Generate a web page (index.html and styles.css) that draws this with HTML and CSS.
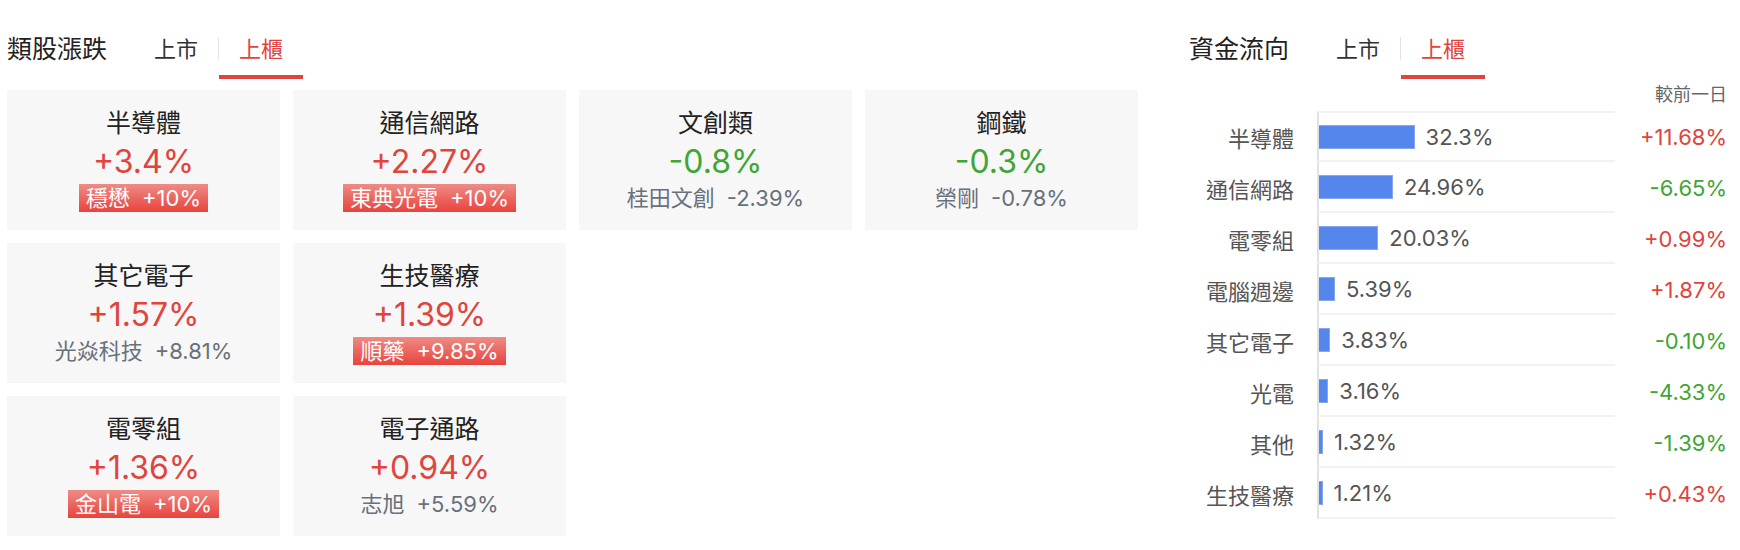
FILE: index.html
```html
<!DOCTYPE html>
<html lang="zh-Hant">
	<head>
		<meta charset="UTF-8" />
		<meta name="viewport" content="width=device-width, initial-scale=1.0" />
		<title>類股漲跌 / 資金流向</title>
		<link rel="stylesheet" href="styles.css">
	</head>
	<body>
		<div class="page">
			<!-- 類股漲跌 -->
			<section class="sectors">
				<div class="panel-head">
					<h2 class="panel-title">類股漲跌</h2>
					<div class="tabs">
						<span class="tab">上市</span>
						<i class="tab-divider"></i>
						<span class="tab active">上櫃</span>
					</div>
				</div>

				<div class="card-grid">
					<div class="card">
						<div class="card-name">半導體</div>
						<div class="card-pct up">+3.4%</div>
						<div class="card-lead limit"><span>穩懋</span><span>+10%</span></div>
					</div>
					<div class="card">
						<div class="card-name">通信網路</div>
						<div class="card-pct up">+2.27%</div>
						<div class="card-lead limit"><span>東典光電</span><span>+10%</span></div>
					</div>
					<div class="card">
						<div class="card-name">文創類</div>
						<div class="card-pct down">-0.8%</div>
						<div class="card-lead"><span>桂田文創</span><span>-2.39%</span></div>
					</div>
					<div class="card">
						<div class="card-name">鋼鐵</div>
						<div class="card-pct down">-0.3%</div>
						<div class="card-lead"><span>榮剛</span><span>-0.78%</span></div>
					</div>
					<div class="card card-break">
						<div class="card-name">其它電子</div>
						<div class="card-pct up">+1.57%</div>
						<div class="card-lead"><span>光焱科技</span><span>+8.81%</span></div>
					</div>
					<div class="card">
						<div class="card-name">生技醫療</div>
						<div class="card-pct up">+1.39%</div>
						<div class="card-lead limit"><span>順藥</span><span>+9.85%</span></div>
					</div>
					<div class="card card-break">
						<div class="card-name">電零組</div>
						<div class="card-pct up">+1.36%</div>
						<div class="card-lead limit"><span>金山電</span><span>+10%</span></div>
					</div>
					<div class="card">
						<div class="card-name">電子通路</div>
						<div class="card-pct up">+0.94%</div>
						<div class="card-lead"><span>志旭</span><span>+5.59%</span></div>
					</div>
				</div>
			</section>

			<!-- 資金流向 -->
			<section class="flow">
				<div class="panel-head">
					<h2 class="panel-title">資金流向</h2>
					<div class="tabs">
						<span class="tab">上市</span>
						<i class="tab-divider"></i>
						<span class="tab active">上櫃</span>
					</div>
				</div>

				<div class="flow-note">較前一日</div>

				<div class="flow-chart">
					<div class="flow-row">
						<span class="flow-label">半導體</span>
						<div class="flow-track"><span class="flow-bar" style="width: 32.3%"></span><span class="flow-value">32.3%</span></div>
						<span class="flow-change up">+11.68%</span>
					</div>
					<div class="flow-row">
						<span class="flow-label">通信網路</span>
						<div class="flow-track"><span class="flow-bar" style="width: 24.96%"></span><span class="flow-value">24.96%</span></div>
						<span class="flow-change down">-6.65%</span>
					</div>
					<div class="flow-row">
						<span class="flow-label">電零組</span>
						<div class="flow-track"><span class="flow-bar" style="width: 20.03%"></span><span class="flow-value">20.03%</span></div>
						<span class="flow-change up">+0.99%</span>
					</div>
					<div class="flow-row">
						<span class="flow-label">電腦週邊</span>
						<div class="flow-track"><span class="flow-bar" style="width: 5.39%"></span><span class="flow-value">5.39%</span></div>
						<span class="flow-change up">+1.87%</span>
					</div>
					<div class="flow-row">
						<span class="flow-label">其它電子</span>
						<div class="flow-track"><span class="flow-bar" style="width: 3.83%"></span><span class="flow-value">3.83%</span></div>
						<span class="flow-change down">-0.10%</span>
					</div>
					<div class="flow-row">
						<span class="flow-label">光電</span>
						<div class="flow-track"><span class="flow-bar" style="width: 3.16%"></span><span class="flow-value">3.16%</span></div>
						<span class="flow-change down">-4.33%</span>
					</div>
					<div class="flow-row">
						<span class="flow-label">其他</span>
						<div class="flow-track"><span class="flow-bar" style="width: 1.32%"></span><span class="flow-value">1.32%</span></div>
						<span class="flow-change down">-1.39%</span>
					</div>
					<div class="flow-row">
						<span class="flow-label">生技醫療</span>
						<div class="flow-track"><span class="flow-bar" style="width: 1.21%"></span><span class="flow-value">1.21%</span></div>
						<span class="flow-change up">+0.43%</span>
					</div>
				</div>
			</section>
		</div>
	</body>
</html>
```

FILE: styles.css
```css
body {
	margin: 0;
	font-family: Inter, 'Noto Sans CJK TC', sans-serif;
	background-color: #fff;
	color: #222;
}
.page {
	display: flex;
	padding: 0 7px;
}
.sectors {
	width: 1131px;
}
.flow {
	width: 538px;
	margin-left: 51px;
}

/* 標題列與分頁 */
.panel-head {
	display: flex;
	align-items: flex-start;
}
.panel-title {
	margin: 0;
	padding-top: 32px;
	font-size: 25px;
	font-weight: 400;
	line-height: 34px;
	color: #222;
}
.tabs {
	display: flex;
	align-items: flex-start;
	margin-left: 27px;
}
.tab {
	padding: 32px 20px 9px;
	font-size: 22px;
	line-height: 34px;
	color: #333;
	border-bottom: 4px solid transparent;
	cursor: pointer;
}
.tab.active {
	color: #e0453d;
	border-bottom-color: #e0453d;
}
.tab-divider {
	width: 1px;
	height: 23px;
	margin-top: 37px;
	background-color: #e4e4e4;
}

/* 類股卡片 */
.card-grid {
	display: grid;
	grid-template-columns: repeat(4, 273px);
	grid-auto-rows: 140px;
	gap: 13px;
	margin-top: 11px;
}
.card {
	padding-top: 16px;
	background-color: #f7f7f7;
	text-align: center;
}
.card-break {
	grid-column: 1;
}
.card-name {
	font-size: 25px;
	line-height: 34px;
	color: #222;
}
.card-pct {
	font-size: 32px;
	line-height: 44px;
}
.card-lead {
	display: inline-flex;
	gap: 12px;
	padding: 0 7px;
	font-size: 22px;
	line-height: 28px;
	color: #68707b;
}
.card-lead.limit {
	color: white;
	background: linear-gradient(#ef8b86, #e8433c);
}
.up {
	color: #e0443c;
}
.down {
	color: #3fa535;
}

/* 資金流向長條圖 */
.flow-note {
	margin: 4px 0;
	font-size: 18px;
	line-height: 24px;
	color: #666;
	text-align: right;
}
.flow-row {
	display: grid;
	grid-template-columns: 128px 298px 1fr;
	height: 51px;
}
.flow-label {
	align-self: center;
	padding-right: 23px;
	font-size: 22px;
	color: #555;
	text-align: right;
}
.flow-track {
	display: flex;
	align-items: center;
	border-left: 2px solid #e2e2e2;
	border-bottom: 2px solid #f2f2f2;
}
.flow-row:first-child .flow-track {
	border-top: 2px solid #f2f2f2;
}
.flow-bar {
	box-sizing: border-box;
	height: 24px;
	background-color: #5586eb;
	border: 1px solid #86a7ef;
	border-left: none;
}
.flow-value {
	margin-left: 11px;
	font-size: 22px;
	color: #555;
}
.flow-change {
	align-self: center;
	font-size: 22px;
	text-align: right;
}
```
